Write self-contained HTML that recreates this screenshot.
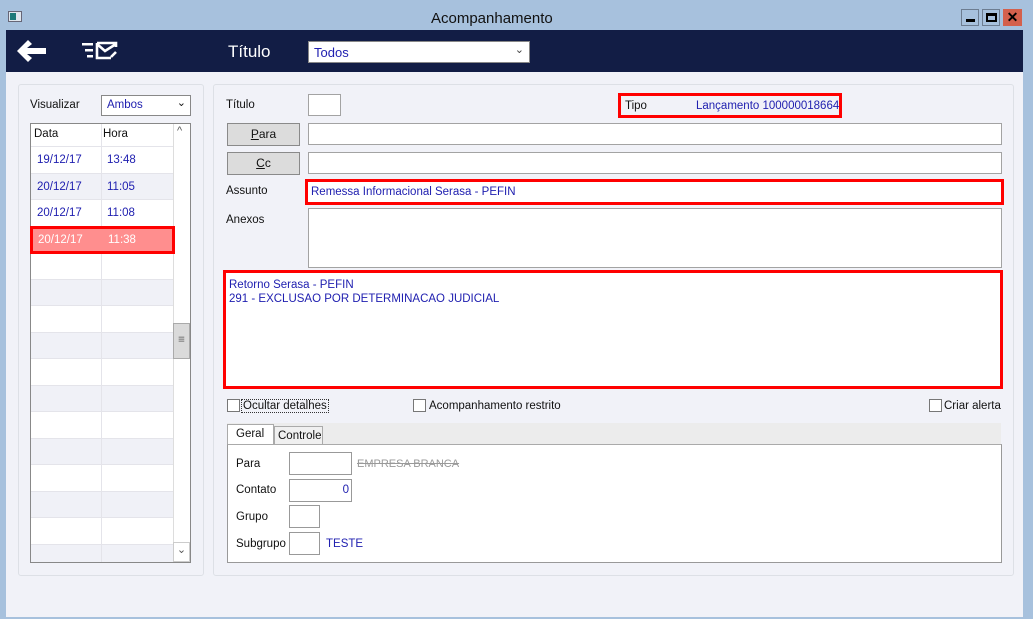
<!DOCTYPE html>
<html><head><meta charset="utf-8"><style>
*{margin:0;padding:0;box-sizing:border-box}
body{width:1033px;height:619px;background:#a7c1dd;font-family:"Liberation Sans",sans-serif;font-size:11.5px;color:#111;position:relative;overflow:hidden}
.a{position:absolute;white-space:nowrap}
.in{position:absolute;background:#fff;border:1px solid #a3a3a3}
.blue{color:#2020b0}
.red{border:3px solid #f00}
.row{position:absolute;left:0;width:142px;height:26.5px;border-bottom:1px solid #e4e4ea}
.row span{position:absolute;top:7px}
.btn{position:absolute;background:#dcdcdc;border:1px solid #8a8a8a;text-align:center;line-height:20px;font-size:12px}
.cb{position:absolute;width:13px;height:13px;background:#fff;border:1px solid #777}
</style></head><body>
<div class="a" style="left:8px;top:11px;width:14px;height:11px;background:#dfe6ee;border:1px solid #667"><div class="a" style="left:1px;top:1px;width:6px;height:7px;background:#1e7a7a"></div></div>
<div class="a" style="left:431px;top:10px;font-size:15px;color:#111">Acompanhamento</div>
<div class="a" style="left:961px;top:9px;width:18px;height:17px;border:1px solid #6d7d91;background:#a7c1dd"><div class="a" style="left:4px;top:9px;width:9px;height:3px;background:#000"></div></div>
<div class="a" style="left:982px;top:9px;width:18px;height:17px;border:1px solid #6d7d91;background:#a7c1dd"><div class="a" style="left:3px;top:3px;width:11px;height:9px;border:2px solid #000;border-top-width:3px"></div></div>
<div class="a" style="left:1003px;top:9px;width:19px;height:17px;background:#d4604c;color:#000;font-weight:bold;font-size:14px;text-align:center;line-height:16px">✕</div>
<div class="a" style="left:6px;top:30px;width:1017px;height:42px;background:#121d45"></div>
<svg class="a" style="left:14px;top:38px" width="36" height="26" viewBox="0 0 36 26"><path d="M3 13 L14 2 L18 6 L13 10 H32 V16 H13 L18 20 L14 24 Z" fill="#fff"/></svg>
<svg class="a" style="left:80px;top:40px" width="40" height="22" viewBox="0 0 40 22"><g fill="#fff"><rect x="2" y="3" width="11" height="2.5"/><rect x="5" y="9" width="8" height="2.5"/><rect x="7" y="15" width="6" height="2.5"/></g><path d="M17 3 H36 V7 M36 12 L31 17 M17 3 V18 H31 M17 4 L25 11 L36 4" stroke="#fff" stroke-width="2.6" fill="none"/></svg>
<div class="a" style="left:228px;top:42px;font-size:17px;color:#fff">Título</div>
<div class="in" style="left:308px;top:41px;width:222px;height:22px;border-color:#888"><span class="a blue" style="left:5px;top:3px;font-size:13px">Todos</span><span class="a" style="right:5px;top:1px;font-size:11px;color:#444">⌄</span></div>
<div class="a" style="left:6px;top:72px;width:1017px;height:545px;background:#f1f2f8"></div>
<div class="a" style="left:18px;top:84px;width:186px;height:492px;border:1px solid #dde0e6;border-radius:3px"></div>
<div class="a" style="left:213px;top:84px;width:801px;height:492px;border:1px solid #dde0e6;border-radius:3px"></div>
<div class="a" style="left:30px;top:99px">Visualizar</div>
<div class="in" style="left:101px;top:95px;width:90px;height:21px;border-color:#888"><span class="a blue" style="left:5px;top:3px">Ambos</span><span class="a" style="right:4px;top:0px;font-size:11px">⌄</span></div>
<div class="in" style="left:30px;top:123px;width:161px;height:440px;border-color:#888;background:#fff;overflow:hidden">
<div class="row" style="top:0;height:23px;background:#fff"><span style="left:3px;top:4px">Data</span><span style="left:72px;top:4px">Hora</span></div>
<div class="row" style="top:23px;background:#fff"><span class="blue" style="left:6px">19/12/17</span><span class="blue" style="left:76px">13:48</span></div>
<div class="row" style="top:49.5px;background:#f0f1f7"><span class="blue" style="left:6px">20/12/17</span><span class="blue" style="left:76px">11:05</span></div>
<div class="row" style="top:76px;background:#fff"><span class="blue" style="left:6px">20/12/17</span><span class="blue" style="left:76px">11:08</span></div>
<div class="row" style="top:102.5px;background:#fff"></div>
<div class="row" style="top:129px;background:#fff"></div><div class="row" style="top:155.5px;background:#f0f1f7"></div>
<div class="row" style="top:182px;background:#fff"></div><div class="row" style="top:208.5px;background:#f0f1f7"></div>
<div class="row" style="top:235px;background:#fff"></div><div class="row" style="top:261.5px;background:#f0f1f7"></div>
<div class="row" style="top:288px;background:#fff"></div><div class="row" style="top:314.5px;background:#f0f1f7"></div>
<div class="row" style="top:341px;background:#fff"></div><div class="row" style="top:367.5px;background:#f0f1f7"></div>
<div class="row" style="top:394px;background:#fff"></div><div class="row" style="top:420.5px;background:#f0f1f7"></div>
<div class="a" style="left:70px;top:0;width:1px;height:440px;background:#e4e4ea"></div>
<div class="a" style="left:142px;top:0;width:17px;height:440px;background:#fff;border-left:1px solid #ddd"></div>
<div class="a" style="left:146px;top:1px;font-size:11px;color:#555">^</div>
<div class="a" style="left:142px;top:199px;width:17px;height:36px;background:#dadada;border:1px solid #aaa;text-align:center;line-height:32px;color:#555">≡</div>
<div class="a" style="left:142px;top:418px;width:17px;height:20px;border:1px solid #ccc;text-align:center;font-size:11px;color:#555">⌄</div>
</div>
<div class="a red" style="left:30px;top:226px;width:145px;height:28px;background:#ff8e8e;color:#fff"><span class="a" style="left:5px;top:5px">20/12/17</span><span class="a" style="left:75px;top:5px">11:38</span></div>

<div class="a" style="left:226px;top:99px">Título</div>
<div class="in" style="left:308px;top:94px;width:33px;height:22px"></div>
<div class="a red" style="left:618px;top:93px;width:224px;height:25px"><span class="a" style="left:4px;top:4px">Tipo</span><span class="a blue" style="left:75px;top:4px">Lançamento 100000018664</span></div>
<div class="btn" style="left:227px;top:123px;width:73px;height:23px"><u>P</u>ara</div>
<div class="in" style="left:308px;top:123px;width:694px;height:22px"></div>
<div class="btn" style="left:227px;top:152px;width:73px;height:23px"><u>C</u>c</div>
<div class="in" style="left:308px;top:152px;width:694px;height:22px"></div>
<div class="a" style="left:226px;top:185px">Assunto</div>
<div class="a red" style="left:305px;top:179px;width:699px;height:26px;background:#fff"><span class="a blue" style="left:3px;top:4px">Remessa Informacional Serasa - PEFIN</span></div>
<div class="a" style="left:226px;top:214px">Anexos</div>
<div class="in" style="left:308px;top:208px;width:694px;height:60px"></div>
<div class="a red" style="left:223px;top:270px;width:780px;height:119px;background:#fff"><div class="a blue" style="left:3px;top:5px;line-height:14px">Retorno Serasa - PEFIN<br>291 - EXCLUSAO POR DETERMINACAO JUDICIAL</div></div>
<div class="cb" style="left:227px;top:399px"></div><div class="a" style="left:241px;top:399px;border:1px dotted #333;padding:0 1px">Ocultar detalhes</div>
<div class="cb" style="left:413px;top:399px"></div><div class="a" style="left:429px;top:400px">Acompanhamento restrito</div>
<div class="cb" style="left:929px;top:399px"></div><div class="a" style="left:944px;top:400px">Criar alerta</div>
<div class="a" style="left:227px;top:423px;width:774px;height:21px;background:#ececec"></div>
<div class="a" style="left:227px;top:424px;width:47px;height:22px;background:#fff;border:1px solid #aaa;border-bottom:none;padding:3px 0 0 8px">Geral</div>
<div class="a" style="left:274px;top:426px;width:49px;height:18px;background:#f0f0f0;border:1px solid #aaa;border-bottom:none;padding:3px 0 0 3px">Controle</div>
<div class="a" style="left:227px;top:444px;width:775px;height:119px;background:#fff;border:1px solid #999;border-top:1px solid #aaa"></div>
<div class="a" style="left:274px;top:444px;width:49px;height:1px;background:#aaa"></div>
<div class="a" style="left:236px;top:458px">Para</div>
<div class="in" style="left:289px;top:452px;width:63px;height:23px;border-color:#999"></div>
<div class="a" style="left:357px;top:458px;color:#999;text-decoration:line-through;font-size:11px">EMPRESA BRANCA</div>
<div class="a" style="left:236px;top:484px">Contato</div>
<div class="in" style="left:289px;top:479px;width:63px;height:23px;border-color:#999"><span class="a blue" style="right:2px;top:4px">0</span></div>
<div class="a" style="left:236px;top:511px">Grupo</div>
<div class="in" style="left:289px;top:505px;width:31px;height:23px;border-color:#999"></div>
<div class="a" style="left:236px;top:538px">Subgrupo</div>
<div class="in" style="left:289px;top:532px;width:31px;height:23px;border-color:#999"></div>
<div class="a blue" style="left:326px;top:538px">TESTE</div>
</body></html>
